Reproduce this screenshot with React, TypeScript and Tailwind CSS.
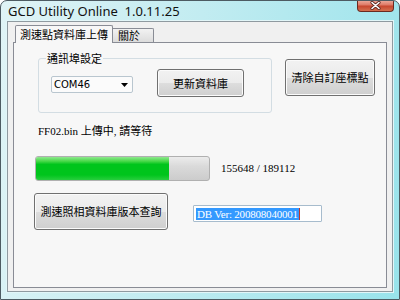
const cjk = "font-['Noto_Sans_CJK_TC',sans-serif]";
const ming = "font-['Liberation_Serif','Noto_Sans_CJK_TC',serif]";

function VistaButton({ label, className }: { label: string; className: string }) {
  return (
    <div
      className={`flex items-center justify-center rounded-[3px] border border-[#707070] bg-[linear-gradient(#f2f2f2_0%,#ebebeb_50%,#dddddd_51%,#cfcfcf_100%)] shadow-[inset_0_0_0_1px_#fbfbfb] text-[11px] leading-none text-black ${cjk} ${className}`}
    >
      {label}
    </div>
  );
}

function CloseButton() {
  return (
    <div className="flex h-[12px] w-[37px] items-center justify-center rounded-b-[4px] border border-t-0 border-[#6b2a20] bg-[linear-gradient(#eeb0a2_0%,#de7a66_45%,#c8472f_55%,#d3704f_100%)]">
      <svg width="11" height="9" viewBox="0 0 11 9">
        <path d="M2 1.5 L9 7.5 M9 1.5 L2 7.5" stroke="#5a2a22" strokeWidth="3.2" strokeLinecap="round" />
        <path d="M2 1.5 L9 7.5 M9 1.5 L2 7.5" stroke="#ffffff" strokeWidth="1.6" strokeLinecap="round" />
      </svg>
    </div>
  );
}

export default function App() {
  return (
    <div className="flex h-[300px] w-[400px] flex-col overflow-hidden rounded-t-[7px] border border-[#4d5b62] bg-[linear-gradient(100deg,#e0f4f6_0%,#c2ecf1_45%,#98e3eb_100%)]">
      {/* Title bar */}
      <div className="flex h-[19px] shrink-0 items-start justify-between">
        <span className="whitespace-pre pl-[7px] pt-[3px] font-['Noto_Sans',sans-serif] text-[13px] leading-[14px] text-[#111]">
          GCD Utility Online  1.0.11.25
        </span>
        <div className="mr-[5px] -mt-px">
          <CloseButton />
        </div>
      </div>

      {/* Client area */}
      <div className="mx-[5px] mb-[6px] flex flex-1 flex-col border border-[#e2f6f8]">
        <div className="flex flex-1 flex-col border border-[#8f9aa0] bg-[#f0f0f0] px-[5px] pb-[3px]">
          {/* Tabs */}
          <div className="flex h-[20px] shrink-0 items-end pl-[2px]">
            <div className={`relative z-10 -mb-px flex h-[18px] w-[98px] items-center rounded-t-[2px] border border-b-0 border-[#898c95] bg-[#f7f7f7] pl-[4px] text-[11px] leading-none text-black ${cjk}`}>
              測速點資料庫上傳
            </div>
            <div className={`flex h-[14px] w-[41px] items-center rounded-tr-[2px] border border-b-0 border-l-0 border-[#898c95] bg-[linear-gradient(#f2f2f2,#dcdcdc)] pl-[5px] text-[11px] leading-none text-black ${cjk}`}>
              關於
            </div>
          </div>

          {/* Tab panel */}
          <div className="flex flex-1 flex-col border border-[#898c95] bg-[#f7f7f7]">
            {/* Row 1: port group + clear button */}
            <div className="mt-[15px] flex items-start pl-[24px]">
              <div className="relative flex h-[55px] w-[234px] items-start rounded-[3px] border border-[#d3dde3] pl-[12px]">
                <span className={`absolute left-[7px] top-[-8px] bg-[#f7f7f7] px-[1px] text-[11px] leading-[14px] text-black ${cjk}`}>
                  通訊埠設定
                </span>
                <div className="mt-[17px] flex h-[17px] w-[82px] items-center justify-between rounded-[2px] border border-[#b9c6cf] bg-[#fbfbfb] pl-[2px] pr-[4px]">
                  <span className="font-['DejaVu_Sans',sans-serif] text-[10px] leading-none text-black">COM46</span>
                  <svg width="7" height="4" viewBox="0 0 7 4">
                    <path d="M0 0 H7 L3.5 4 Z" fill="#000" />
                  </svg>
                </div>
                <VistaButton label="更新資料庫" className="ml-[24px] mt-[10px] h-[28px] w-[87px]" />
              </div>
              <VistaButton label="清除自訂座標點" className="ml-[13px] mt-px h-[37px] w-[90px]" />
            </div>

            {/* Row 2: status text */}
            <div className={`mt-[11px] pl-[24px] text-[11px] leading-[14px] text-black ${ming}`}>
              FF02.bin 上傳中, 請等待
            </div>

            {/* Row 3: progress */}
            <div className="mt-[18px] flex items-center pl-[21px]">
              <div className="flex h-[25px] w-[175px] overflow-hidden rounded-[3px] border border-[#b0b0b0] bg-[linear-gradient(#ececec_0%,#dadada_40%,#cccccc_100%)]">
                <div className="h-full w-[133px] bg-[linear-gradient(#8fe88f_0%,#4ad94a_18%,#00c51c_32%,#00c51c_78%,#28ce3e_100%)]" />
              </div>
              <span className={`ml-[11px] text-[11px] leading-none text-black ${ming}`}>155648 / 189112</span>
            </div>

            {/* Row 4: version query */}
            <div className="mt-[12px] flex items-start pl-[20px]">
              <VistaButton label="測速照相資料庫版本查詢" className="h-[37px] w-[134px]" />
              <div className="ml-[25px] mt-[12px] flex h-[17px] w-[129px] items-center rounded-[1px] border border-[#a7bccd] bg-white pl-[2px]">
                <span className={`bg-[#3399ff] px-px text-[11px] leading-[12px] tracking-[-0.2px] text-white ${ming}`}>DB Ver: 200808040001</span>
                <span className="h-[12px] w-px bg-[#c0392b]" />
              </div>
            </div>
          </div>
        </div>
      </div>
    </div>
  );
}
